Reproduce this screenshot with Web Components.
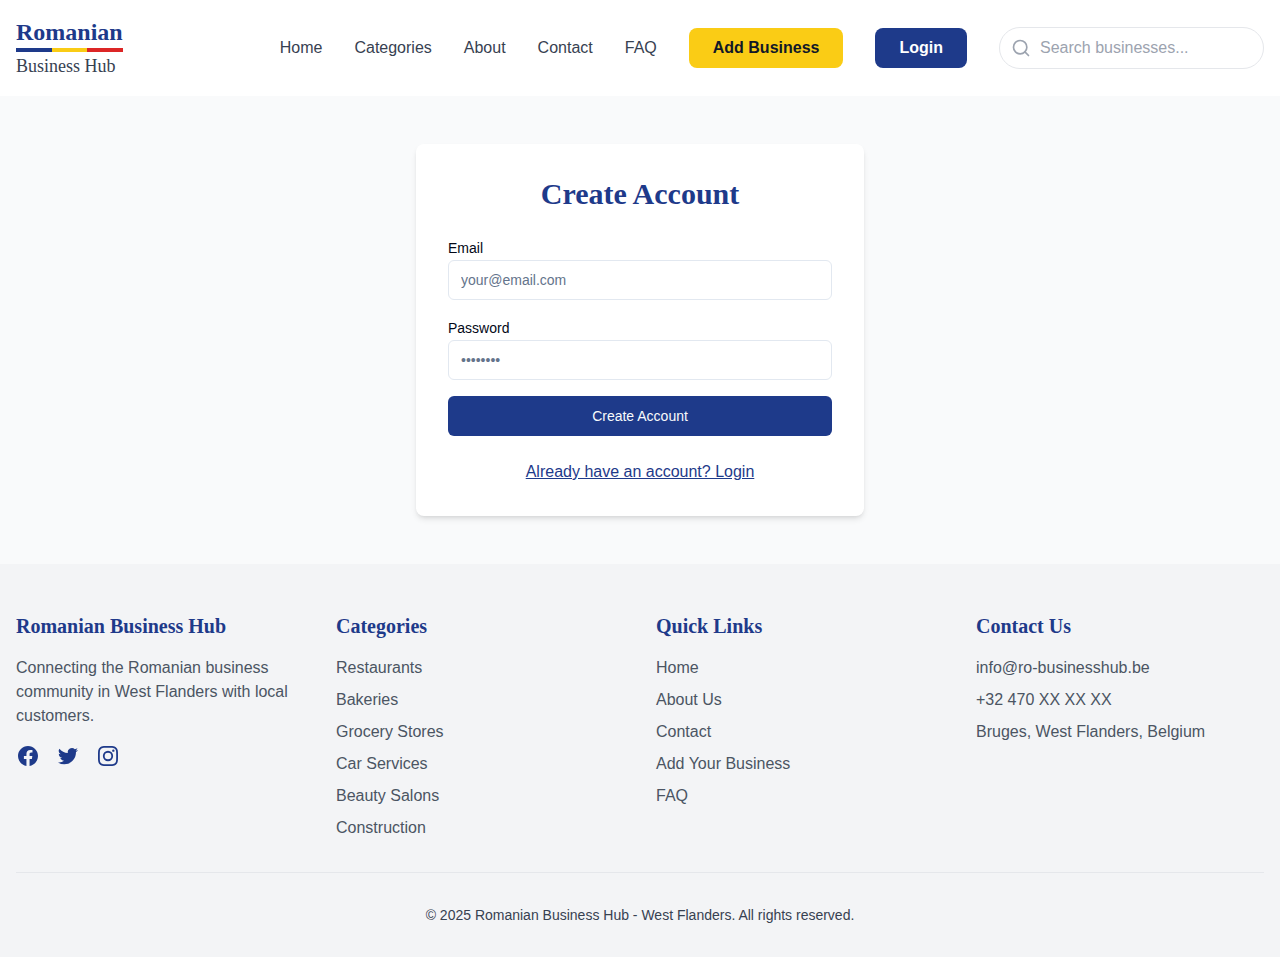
<!DOCTYPE html>
<html lang="en">
<head>
<meta charset="utf-8">
<title>Romanian Business Hub</title>
<style>
html, body { margin: 0; }
body {
  font: 16px/24px "Liberation Sans", Arial, sans-serif;
  color: #020817;
  background: #f9fafb;
  --blue: #1e3a8a;
  --yellow: #facc15;
  --red: #dc2626;
  --serif: "Liberation Serif", "Times New Roman", serif;
}
</style>
</head>
<body>
<hub-page></hub-page>
<script>
const define = (name, html, setup) => {
  const template = document.createElement('template');
  template.innerHTML = html;
  customElements.define(name, class extends HTMLElement {
    constructor() {
      super();
      this.attachShadow({ mode: 'open' }).append(template.content.cloneNode(true));
    }
    connectedCallback() { if (setup) setup(this, this.shadowRoot); }
  });
};

define('hub-logo', `
<style>
:host { display: inline-flex; flex-direction: column; font-family: var(--serif); }
.name { font-size: 24px; line-height: 32px; font-weight: 700; color: var(--blue); }
.flag { display: flex; height: 4px; }
.flag i { flex: 1; }
.flag i:nth-child(1) { background: var(--blue); }
.flag i:nth-child(2) { background: var(--yellow); }
.flag i:nth-child(3) { background: var(--red); }
.sub { font-size: 18px; line-height: 28px; color: #374151; }
</style>
<span class="name">Romanian</span>
<div class="flag"><i></i><i></i><i></i></div>
<span class="sub">Business Hub</span>`);

define('nav-link', `
<style>
:host { display: block; }
a { color: #374151; text-decoration: none; }
</style>
<a href="#"><slot></slot></a>`);

define('nav-button', `
<style>
:host { display: block; }
a { display: block; padding: 8px 24px; border-radius: 8px; font-weight: 700; text-decoration: none; color: #fff; background: var(--blue); }
:host([tone="yellow"]) a { background: var(--yellow); color: #111827; }
</style>
<a href="#"><slot></slot></a>`);

define('search-box', `
<style>
:host { display: flex; align-items: center; gap: 9px; box-sizing: border-box; width: 265px; height: 42px; padding: 8px 16px 8px 11px; border: 1px solid #e5e7eb; border-radius: 21px; background: #fff; }
svg { flex: none; display: block; }
input { flex: 1; min-width: 0; height: 24px; border: 0; padding: 0; outline: 0; background: none; font: inherit; }
input::placeholder { color: #9ca3af; opacity: 1; }
</style>
<svg width="20" height="20" viewBox="0 0 24 24" fill="none" stroke="#9ca3af" stroke-width="2" stroke-linecap="round" stroke-linejoin="round"><circle cx="11" cy="11" r="8"/><path d="m21 21-4.3-4.3"/></svg>
<input type="text" placeholder="Search businesses...">`);

define('site-header', `
<style>
:host { display: flex; align-items: center; justify-content: space-between; padding: 16px; background: #fff; }
nav { display: flex; align-items: center; gap: 32px; }
</style>
<hub-logo></hub-logo>
<nav>
<nav-link>Home</nav-link><nav-link>Categories</nav-link><nav-link>About</nav-link><nav-link>Contact</nav-link><nav-link>FAQ</nav-link>
<nav-button tone="yellow">Add Business</nav-button><nav-button>Login</nav-button>
<search-box></search-box>
</nav>`);

define('form-field', `
<style>
:host { display: block; }
label { display: block; font-size: 14px; line-height: 24px; color: #020817; }
input { display: block; box-sizing: border-box; width: 100%; height: 40px; padding: 8px 12px; border: 1px solid #e2e8f0; border-radius: 6px; background: #fff; font: 14px/20px "Liberation Sans", Arial, sans-serif; outline: 0; }
input::placeholder { color: #64748b; opacity: 1; }
</style>
<label for="field"><slot></slot></label>
<input id="field">`, (host, root) => {
  const input = root.querySelector('input');
  input.type = host.getAttribute('type');
  input.placeholder = host.getAttribute('placeholder');
});

define('account-card', `
<style>
:host { display: block; box-sizing: border-box; width: 448px; padding: 32px; background: #fff; border-radius: 8px; box-shadow: 0 4px 6px -1px rgba(0,0,0,.1), 0 2px 4px -2px rgba(0,0,0,.1); }
h1 { margin: 0 0 24px; font: 700 30px/36px var(--serif); color: var(--blue); text-align: center; }
form { display: flex; flex-direction: column; gap: 16px; }
button { height: 40px; border: 0; border-radius: 6px; background: var(--blue); color: #f8fafc; font: 14px/20px "Liberation Sans", Arial, sans-serif; }
p { margin: 24px 0 0; text-align: center; }
p a { color: var(--blue); text-decoration: underline; }
</style>
<h1>Create Account</h1>
<form>
<form-field type="email" placeholder="your@email.com">Email</form-field>
<form-field type="password" placeholder="••••••••">Password</form-field>
<button type="button">Create Account</button>
</form>
<p><a href="#">Already have an account? Login</a></p>`);

define('footer-column', `
<style>
:host { display: block; color: #4b5563; }
h3 { margin: 0 0 16px; font: 700 20px/28px var(--serif); color: var(--blue); }
.items { display: flex; flex-direction: column; gap: 8px; }
</style>
<h3><slot name="title"></slot></h3>
<div class="items"><slot></slot></div>`);

define('social-links', `
<style>
:host { display: flex; gap: 16px; margin-top: 8px; }
a { display: block; width: 24px; height: 24px; color: var(--blue); }
svg { display: block; }
</style>
<a href="#" aria-label="Facebook"><svg width="24" height="24" viewBox="0 0 24 24" fill="currentColor"><path fill-rule="evenodd" d="M22 12c0-5.523-4.477-10-10-10S2 6.477 2 12c0 4.991 3.657 9.128 8.438 9.878v-6.987h-2.54V12h2.54V9.797c0-2.506 1.492-3.89 3.777-3.89 1.094 0 2.238.195 2.238.195v2.46h-1.26c-1.243 0-1.63.771-1.63 1.562V12h2.773l-.443 2.89h-2.33v6.988C18.343 21.128 22 16.991 22 12z" clip-rule="evenodd"/></svg></a>
<a href="#" aria-label="Twitter"><svg width="24" height="24" viewBox="0 0 24 24" fill="currentColor"><path d="M8.29 20.251c7.547 0 11.675-6.253 11.675-11.675 0-.178 0-.355-.012-.53A8.348 8.348 0 0022 5.92a8.19 8.19 0 01-2.357.646 4.118 4.118 0 001.804-2.27 8.224 8.224 0 01-2.605.996 4.107 4.107 0 00-6.993 3.743 11.65 11.65 0 01-8.457-4.287 4.106 4.106 0 001.27 5.477A4.072 4.072 0 012.8 9.713v.052a4.105 4.105 0 003.292 4.022 4.095 4.095 0 01-1.853.07 4.108 4.108 0 003.834 2.85A8.233 8.233 0 012 18.407a11.616 11.616 0 006.29 1.84"/></svg></a>
<a href="#" aria-label="Instagram"><svg width="24" height="24" viewBox="0 0 24 24" fill="currentColor"><path fill-rule="evenodd" d="M12.315 2c2.43 0 2.784.013 3.808.06 1.064.049 1.791.218 2.427.465a4.902 4.902 0 011.772 1.153 4.902 4.902 0 011.153 1.772c.247.636.416 1.363.465 2.427.048 1.067.06 1.407.06 4.123v.08c0 2.643-.012 2.987-.06 4.043-.049 1.064-.218 1.791-.465 2.427a4.902 4.902 0 01-1.153 1.772 4.902 4.902 0 01-1.772 1.153c-.636.247-1.363.416-2.427.465-1.067.048-1.407.06-4.123.06h-.08c-2.643 0-2.987-.012-4.043-.06-1.064-.049-1.791-.218-2.427-.465a4.902 4.902 0 01-1.772-1.153 4.902 4.902 0 01-1.153-1.772c-.247-.636-.416-1.363-.465-2.427-.047-1.024-.06-1.379-.06-3.808v-.63c0-2.43.013-2.784.06-3.808.049-1.064.218-1.791.465-2.427a4.902 4.902 0 011.153-1.772A4.902 4.902 0 015.45 2.525c.636-.247 1.363-.416 2.427-.465C8.901 2.013 9.256 2 11.685 2h.63zm-.081 1.802h-.468c-2.456 0-2.784.011-3.807.058-.975.045-1.504.207-1.857.344-.467.182-.8.398-1.15.748-.35.35-.566.683-.748 1.15-.137.353-.3.882-.344 1.857-.047 1.023-.058 1.351-.058 3.807v.468c0 2.456.011 2.784.058 3.807.045.975.207 1.504.344 1.857.182.466.399.8.748 1.15.35.35.683.566 1.15.748.353.137.882.3 1.857.344 1.054.048 1.37.058 4.041.058h.08c2.597 0 2.917-.01 3.96-.058.976-.045 1.505-.207 1.858-.344.466-.182.8-.398 1.15-.748.35-.35.566-.683.748-1.15.137-.353.3-.882.344-1.857.048-1.055.058-1.37.058-4.041v-.08c0-2.597-.01-2.917-.058-3.96-.045-.976-.207-1.505-.344-1.858a3.097 3.097 0 00-.748-1.15 3.098 3.098 0 00-1.15-.748c-.353-.137-.882-.3-1.857-.344-1.023-.047-1.351-.058-3.807-.058zM12 6.865a5.135 5.135 0 110 10.27 5.135 5.135 0 010-10.27zm0 1.802a3.333 3.333 0 100 6.666 3.333 3.333 0 000-6.666zm5.338-3.205a1.2 1.2 0 110 2.4 1.2 1.2 0 010-2.4z" clip-rule="evenodd"/></svg></a>`);

define('site-footer', `
<style>
:host { display: block; padding: 48px 16px 32px; background: #f3f4f6; }
.columns { display: grid; grid-template-columns: repeat(4, 1fr); gap: 32px; }
.legal { margin-top: 32px; padding-top: 32px; border-top: 1px solid #e5e7eb; text-align: center; font-size: 14px; line-height: 20px; color: #374151; }
</style>
<div class="columns">
<footer-column><span slot="title">Romanian Business Hub</span><div>Connecting the Romanian business community in West Flanders with local customers.</div><social-links></social-links></footer-column>
<footer-column><span slot="title">Categories</span><span>Restaurants</span><span>Bakeries</span><span>Grocery Stores</span><span>Car Services</span><span>Beauty Salons</span><span>Construction</span></footer-column>
<footer-column><span slot="title">Quick Links</span><span>Home</span><span>About Us</span><span>Contact</span><span>Add Your Business</span><span>FAQ</span></footer-column>
<footer-column><span slot="title">Contact Us</span><span>info@ro-businesshub.be</span><span>+32 470 XX XX XX</span><span>Bruges, West Flanders, Belgium</span></footer-column>
</div>
<div class="legal">© 2025 Romanian Business Hub - West Flanders. All rights reserved.</div>`);

define('hub-page', `
<style>
:host { display: block; }
main { display: flex; justify-content: center; padding: 48px 16px; background: #f9fafb; }
</style>
<site-header></site-header>
<main><account-card></account-card></main>
<site-footer></site-footer>`);
</script>
</body>
</html>
